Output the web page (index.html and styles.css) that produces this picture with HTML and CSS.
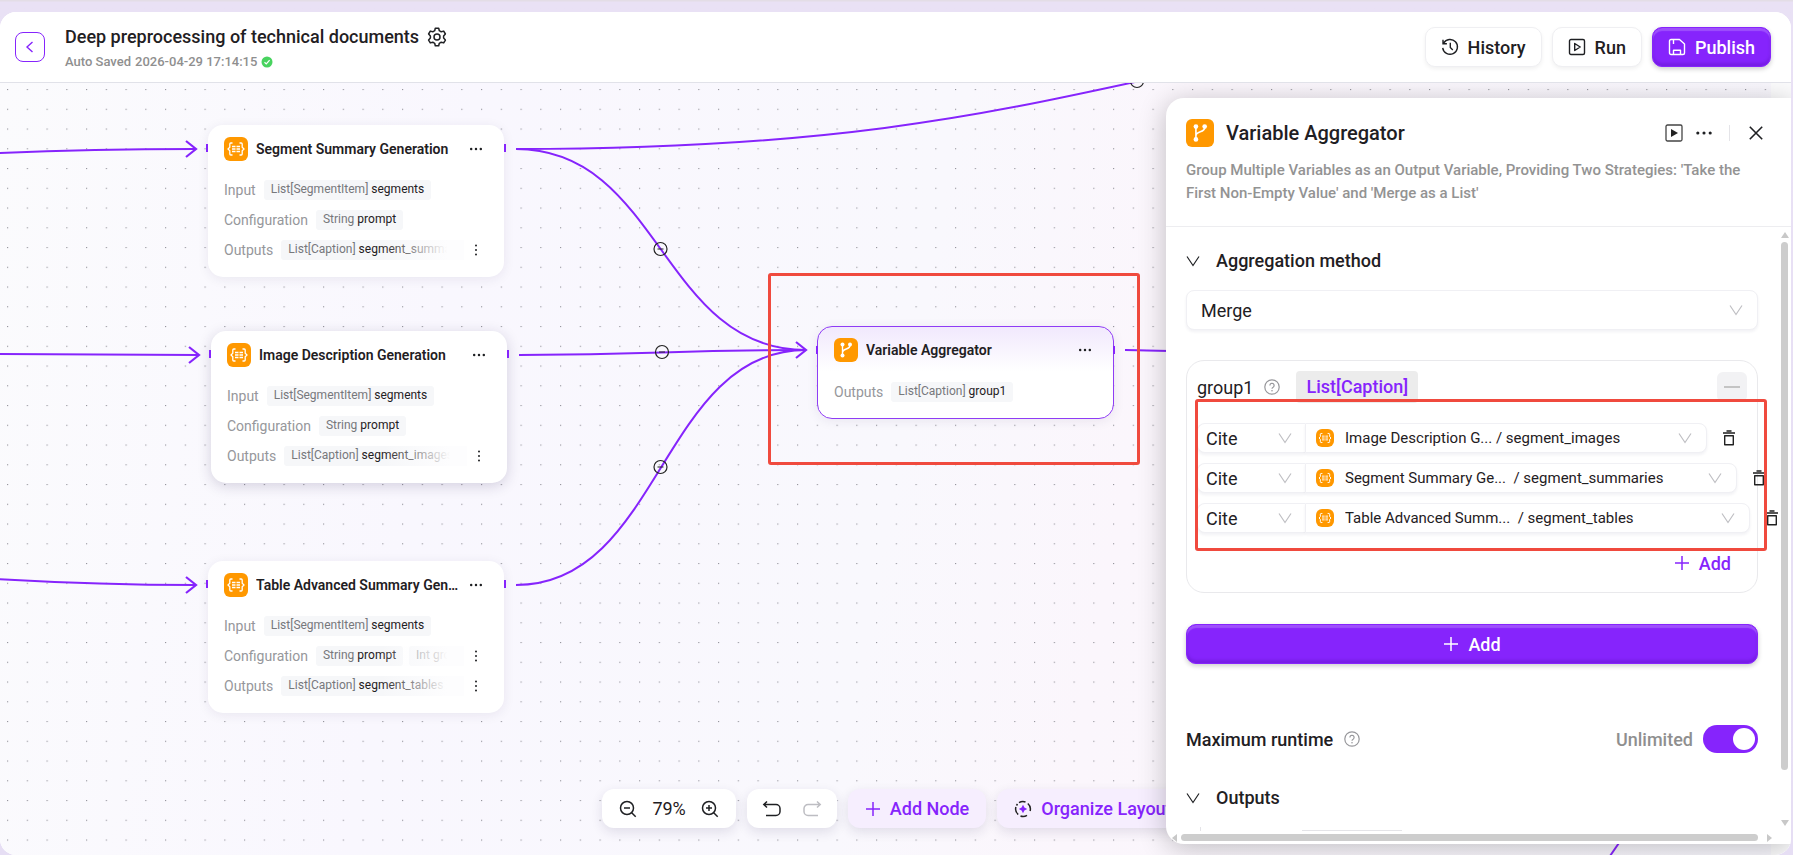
FILE: index.html
```html
<!DOCTYPE html>
<html lang="en">
<head>
  <meta charset="UTF-8">
  <meta name="viewport" content="width=device-width, initial-scale=1.0">
  <title>Deep preprocessing of technical documents</title>
  <link rel="stylesheet" href="styles.css">
</head>

<body>
  <!-- Icon sprite -->
  <svg class="sprite" aria-hidden="true">
    <symbol id="i-list" viewBox="0 0 24 24">
      <g fill="none" stroke="#fff" stroke-width="1.3">
        <path d="M8.5 6H6.8a1 1 0 0 0-1 1v3.2L4 12l1.8 1.8V17a1 1 0 0 0 1 1h1.7M15.500 6h1.700a1 1 0 0 1 1 1v3.200L20 12l-1.800 1.800V17a1 1 0 0 1-1 1h-1.700"/>
        <path d="M8 9.500h3.500M12.500 9.500H16M8 12h3.500M12.500 12H16M8 14.500h3.500M12.500 14.500H16"/>
      </g>
    </symbol>
    <symbol id="i-branch" viewBox="0 0 24 24">
      <path d="M8.500 7v11M16 7.500c0 4.500-7.500 2.500-7.500 7" fill="none" stroke="#fff" stroke-width="1.400"/>
      <circle cx="8.500" cy="6.500" r="2" fill="#fff"/>
      <circle cx="16" cy="6.500" r="2" fill="#fff"/>
      <circle cx="8.500" cy="17.500" r="2" fill="#fff"/>
    </symbol>
    <symbol id="i-down" viewBox="0 0 14 14">
      <path d="M1 2.500l6 9 6-9" fill="none" stroke="currentColor" stroke-width="1.200"/>
    </symbol>
    <symbol id="i-plus" viewBox="0 0 16 16">
      <path d="M8 1v14M1 8h14" fill="none" stroke="currentColor" stroke-width="1.500"/>
    </symbol>
    <symbol id="i-more" viewBox="0 0 16 16">
      <g fill="currentColor"><circle cx="2.500" cy="8" r="1.400"/><circle cx="8" cy="8" r="1.400"/><circle cx="13.500" cy="8" r="1.400"/></g>
    </symbol>
    <symbol id="i-more-v" viewBox="0 0 4 12">
      <g fill="currentColor"><circle cx="2" cy="1.500" r="1"/><circle cx="2" cy="6" r="1"/><circle cx="2" cy="10.500" r="1"/></g>
    </symbol>
    <symbol id="i-help" viewBox="0 0 16 16">
      <g fill="none" stroke="currentColor" stroke-width="1.200"><circle cx="8" cy="8" r="7.200"/><path d="M5.900 6.400a2.100 2.100 0 1 1 3.200 1.800c-.7.400-1.100.8-1.100 1.600"/></g>
      <circle cx="8" cy="11.700" r=".8" fill="currentColor"/>
    </symbol>
    <symbol id="i-trash" viewBox="0 0 16 18">
      <path d="M2 4h12M5.500 2h5" fill="none" stroke="#555" stroke-width="2"/>
      <path d="M3.700 6.700h8.600v9H3.700z" fill="none" stroke="#222" stroke-width="1.400" stroke-linejoin="round"/>
    </symbol>
  </svg>

  <div class="shell">
    <header class="topbar">
      <button type="button" class="back" aria-label="Back">
        <svg width="16" height="16" viewBox="0 0 16 16"><path d="M10.500 3L5 8l5.500 5" fill="none" stroke="currentColor" stroke-width="1.400"/></svg>
      </button>
      <div class="heading">
        <div class="heading-row">
          <h1>Deep preprocessing of technical documents</h1>
          <button type="button" class="plain" aria-label="Settings">
            <svg width="20" height="20" viewBox="0 0 20 20" fill="none" stroke="currentColor" stroke-width="1.500" stroke-linejoin="round">
              <path d="M8.300 1.200h3.400l.6 2.500 1.900 1.100 2.500-.7 1.700 2.900-1.800 1.900v2.200l1.800 1.900-1.700 2.900-2.500-.7-1.900 1.100-.6 2.500H8.300l-.6-2.500-1.900-1.100-2.500.7L1.600 13l1.800-1.900V8.900L1.600 7l1.700-2.900 2.500.7 1.900-1.100z"/>
              <circle cx="10" cy="10" r="3"/>
            </svg>
          </button>
        </div>
        <p class="saved">
          <span>Auto Saved</span>
          <span>2026-04-29 17:14:15</span>
          <svg width="12" height="12" viewBox="0 0 12 12"><circle cx="6" cy="6" r="5.500" fill="#48d35f"/><path d="M3.500 6.200l1.800 1.700 3.300-3.700" fill="none" stroke="#fff" stroke-width="1.200"/></svg>
        </p>
      </div>
      <div class="actions">
        <button type="button" class="btn">
          <svg width="18" height="18" viewBox="0 0 18 18" fill="none" stroke="currentColor" stroke-width="1.400"><path d="M2.600 5.200A7.400 7.400 0 1 1 1.700 9.800M2 1.800v3.900h3.900M9.300 4.800v4.700l2.500 2.400"/></svg>
          History
        </button>
        <button type="button" class="btn">
          <svg width="18" height="18" viewBox="0 0 18 18" fill="none" stroke="currentColor" stroke-width="1.400" stroke-linejoin="round"><rect x="1.500" y="1.500" width="15" height="15" rx="1.500"/><path d="M6.700 5.500v7l5.500-3.500z"/></svg>
          Run
        </button>
        <button type="button" class="btn btn-primary">
          <svg width="18" height="18" viewBox="0 0 18 18" fill="none" stroke="currentColor" stroke-width="1.400" stroke-linejoin="round"><path d="M3 1.500h8.500l5 4.500v9a1.500 1.500 0 0 1-1.500 1.500H3A1.500 1.500 0 0 1 1.500 15V3A1.500 1.500 0 0 1 3 1.500zM5.500 1.500V6M5.500 16.500v-4.200h7v4.200"/></svg>
          Publish
        </button>
      </div>
    </header>

    <main class="canvas">
      <svg class="edges" width="100%" height="100%">
        <defs>
          <pattern id="dots" width="25" height="25" patternUnits="userSpaceOnUse" patternTransform="translate(7 6) scale(.79)">
            <rect width="1.500" height="1.400" fill="#96959d"/>
          </pattern>
          <marker id="arrow" markerUnits="userSpaceOnUse" markerWidth="24" markerHeight="24" refX="11" refY="10" orient="0">
            <path d="M1 2l10 8-10 8" fill="none" stroke="#8624fc" stroke-width="2.200"/>
          </marker>
        </defs>
        <rect class="grid" width="100%" height="100%" fill="url(#dots)"/>
        <g fill="none" stroke="#8624fc" stroke-width="2">
          <path d="M-20 71C60 67 140 66 196 66" marker-end="url(#arrow)"/>
          <path d="M-20 271C60 272 140 272 199 272" marker-end="url(#arrow)"/>
          <path d="M-20 495C60 500 140 502 196 502" marker-end="url(#arrow)"/>
          <path d="M516 66C1137 66 1137-69 1759-69"/>
          <path d="M516 66C661 66 661 267 806 267"/>
          <path d="M519 272C662 272 662 267 806 267"/>
          <path d="M516 502C661 502 661 267 806 267" marker-end="url(#arrow)"/>
          <path d="M1125 267C1140 267 1160 268 1200 269"/>
          <path d="M1610 773l20-29"/>
        </g>
        <g fill="none" stroke="#222" stroke-width="1.200">
          <path d="M657.500 166h6M659 269h6M657.500 384h6"/>
          <circle cx="660.500" cy="166" r="6.500"/>
          <circle cx="662" cy="269" r="6.500"/>
          <circle cx="660.500" cy="384" r="6.500"/>
          <circle cx="1137" cy="-2" r="6.500"/>
        </g>
      </svg>

      <article class="node" style="left: 208px; top: 42px">
        <div class="node-head">
          <span class="badge"><svg><use href="#i-list"/></svg></span>
          <h2>Segment Summary Generation</h2>
          <button type="button" class="plain" aria-label="More"><svg width="14" height="14"><use href="#i-more"/></svg></button>
        </div>
        <div class="line"><span class="key">Input</span><div class="vars"><span class="chip"><i>List[SegmentItem]</i>segments</span></div></div>
        <div class="line"><span class="key">Configuration</span><div class="vars"><span class="chip"><i>String</i>prompt</span></div></div>
        <div class="line"><span class="key">Outputs</span><div class="vars cut"><span class="chip"><i>List[Caption]</i>segment_summaries</span></div><svg class="more-v"><use href="#i-more-v"/></svg></div>
      </article>

      <article class="node raised" style="left: 211px; top: 248px">
        <div class="node-head">
          <span class="badge"><svg><use href="#i-list"/></svg></span>
          <h2>Image Description Generation</h2>
          <button type="button" class="plain" aria-label="More"><svg width="14" height="14"><use href="#i-more"/></svg></button>
        </div>
        <div class="line"><span class="key">Input</span><div class="vars"><span class="chip"><i>List[SegmentItem]</i>segments</span></div></div>
        <div class="line"><span class="key">Configuration</span><div class="vars"><span class="chip"><i>String</i>prompt</span></div></div>
        <div class="line"><span class="key">Outputs</span><div class="vars cut"><span class="chip"><i>List[Caption]</i>segment_images</span></div><svg class="more-v"><use href="#i-more-v"/></svg></div>
      </article>

      <article class="node" style="left: 208px; top: 478px">
        <div class="node-head">
          <span class="badge"><svg><use href="#i-list"/></svg></span>
          <h2>Table Advanced Summary Generation</h2>
          <button type="button" class="plain" aria-label="More"><svg width="14" height="14"><use href="#i-more"/></svg></button>
        </div>
        <div class="line"><span class="key">Input</span><div class="vars"><span class="chip"><i>List[SegmentItem]</i>segments</span></div></div>
        <div class="line"><span class="key">Configuration</span><div class="vars cut"><span class="chip"><i>String</i>prompt</span><span class="chip"><i>Int</i>group</span></div><svg class="more-v"><use href="#i-more-v"/></svg></div>
        <div class="line"><span class="key">Outputs</span><div class="vars cut"><span class="chip"><i>List[Caption]</i>segment_tables</span></div><svg class="more-v"><use href="#i-more-v"/></svg></div>
      </article>

      <article class="node selected" style="left: 817px; top: 243px">
        <div class="node-head">
          <span class="badge"><svg><use href="#i-branch"/></svg></span>
          <h2>Variable Aggregator</h2>
          <button type="button" class="plain" aria-label="More"><svg width="14" height="14"><use href="#i-more"/></svg></button>
        </div>
        <div class="line"><span class="key">Outputs</span><div class="vars"><span class="chip"><i>List[Caption]</i>group1</span></div></div>
      </article>

      <div class="mark" style="left: 768px; top: 190px; width: 372px; height: 192px"></div>

      <div class="toolbar">
        <div class="tool-group">
          <button type="button" class="plain" aria-label="Zoom out"><svg width="18" height="18" viewBox="0 0 18 18" fill="none" stroke="currentColor" stroke-width="1.500"><circle cx="8" cy="8" r="6.500"/><path d="M12.700 12.700l4 4M5 8h6"/></svg></button>
          <span class="zoom">79%</span>
          <button type="button" class="plain" aria-label="Zoom in"><svg width="18" height="18" viewBox="0 0 18 18" fill="none" stroke="currentColor" stroke-width="1.500"><circle cx="8" cy="8" r="6.500"/><path d="M12.700 12.700l4 4M5 8h6M8 5v6"/></svg></button>
        </div>
        <div class="tool-group history">
          <button type="button" class="plain" aria-label="Undo"><svg width="20" height="18" viewBox="0 0 20 18" fill="none" stroke="currentColor" stroke-width="1.500"><path d="M5 1.500L1.800 4.500 5 7.500M1.800 4.500H14a4 4 0 0 1 4 4v3a4 4 0 0 1-4 4H4"/></svg></button>
          <button type="button" class="plain" aria-label="Redo" disabled><svg width="20" height="18" viewBox="0 0 20 18" fill="none" stroke="currentColor" stroke-width="1.500"><path d="M15 1.500l3.200 3L15 7.500M18.200 4.500H6a4 4 0 0 0-4 4v3a4 4 0 0 0 4 4h10"/></svg></button>
        </div>
        <button type="button" class="tool-btn"><svg width="16" height="16"><use href="#i-plus"/></svg>Add Node</button>
        <button type="button" class="tool-btn">
          <svg width="18" height="18" viewBox="0 0 18 18"><path d="M5 2.700a7.400 7.400 0 0 1 6.500-.7M13.800 3.500a7.400 7.400 0 0 1 2.300 7.500M13 15.300a7.400 7.400 0 0 1-6.500.7M4.200 14.500A7.400 7.400 0 0 1 1.900 7M2.500 5.500l1-1.500" fill="none" stroke="#222" stroke-width="1.500"/><path d="M9 4.800l1.400 2.800L13.200 9l-2.800 1.400L9 13.200l-1.400-2.800L4.800 9l2.800-1.400z" fill="#8624fc"/></svg>
          Organize Layout
        </button>
      </div>

      <div class="rail"></div>

      <aside class="panel">
        <div class="panel-head">
          <div class="panel-title">
            <span class="badge badge-lg"><svg><use href="#i-branch"/></svg></span>
            <h2>Variable Aggregator</h2>
            <button type="button" class="plain" aria-label="Run node"><svg width="18" height="18" viewBox="0 0 18 18"><rect x="1" y="1" width="16" height="16" rx="1.500" fill="none" stroke="#444" stroke-width="1.300"/><path d="M6 5v8l7-4z" fill="#222"/></svg></button>
            <button type="button" class="plain" aria-label="More"><svg width="18" height="18"><use href="#i-more"/></svg></button>
            <span class="divider"></span>
            <button type="button" class="plain" aria-label="Close"><svg width="14" height="14" viewBox="0 0 14 14"><path d="M.8.8l12.400 12.400M13.200.8L.8 13.200" stroke="currentColor" stroke-width="1.600"/></svg></button>
          </div>
          <p>Group Multiple Variables as an Output Variable, Providing Two Strategies: 'Take the First Non-Empty Value' and 'Merge as a List'</p>
        </div>

        <div class="panel-scroll">
          <div class="panel-body">
            <h3 class="section"><svg width="14" height="14"><use href="#i-down"/></svg><label for="method">Aggregation method</label></h3>
            <div class="select method">
              <select id="method"><option>Merge</option></select>
              <svg class="caret"><use href="#i-down"/></svg>
            </div>

            <div class="group">
              <div class="group-head">
                <span>group1</span>
                <svg class="help" width="16" height="16"><use href="#i-help"/></svg>
                <span class="type">List[Caption]</span>
                <button type="button" class="remove" aria-label="Remove group"><svg width="16" height="2"><path d="M0 1h16" stroke="#b5b5b5" stroke-width="1.500"/></svg></button>
              </div>

              <div class="refs">
                <div class="ref">
                  <div class="select kind"><select aria-label="Value type"><option>Cite</option></select><svg class="caret"><use href="#i-down"/></svg></div>
                  <div class="select source" style="width: 402px">
                    <span class="badge badge-sm"><svg><use href="#i-list"/></svg></span>
                    <select aria-label="Variable"><option>Image Description G... / segment_images</option></select>
                    <svg class="caret"><use href="#i-down"/></svg>
                  </div>
                  <button type="button" class="plain" aria-label="Delete"><svg width="16" height="18"><use href="#i-trash"/></svg></button>
                </div>
                <div class="ref">
                  <div class="select kind"><select aria-label="Value type"><option>Cite</option></select><svg class="caret"><use href="#i-down"/></svg></div>
                  <div class="select source" style="width: 432px">
                    <span class="badge badge-sm"><svg><use href="#i-list"/></svg></span>
                    <select aria-label="Variable"><option>Segment Summary Ge...&nbsp; / segment_summaries</option></select>
                    <svg class="caret"><use href="#i-down"/></svg>
                  </div>
                  <button type="button" class="plain" aria-label="Delete"><svg width="16" height="18"><use href="#i-trash"/></svg></button>
                </div>
                <div class="ref">
                  <div class="select kind"><select aria-label="Value type"><option>Cite</option></select><svg class="caret"><use href="#i-down"/></svg></div>
                  <div class="select source" style="width: 445px">
                    <span class="badge badge-sm"><svg><use href="#i-list"/></svg></span>
                    <select aria-label="Variable"><option>Table Advanced Summ...&nbsp; / segment_tables</option></select>
                    <svg class="caret"><use href="#i-down"/></svg>
                  </div>
                  <button type="button" class="plain" aria-label="Delete"><svg width="16" height="18"><use href="#i-trash"/></svg></button>
                </div>
                <div class="mark mark-refs"></div>
              </div>

              <button type="button" class="add-link"><svg width="16" height="16"><use href="#i-plus"/></svg>Add</button>
            </div>

            <button type="button" class="btn btn-primary add-group"><svg width="16" height="16"><use href="#i-plus"/></svg>Add</button>

            <div class="runtime">
              <h3>Maximum runtime</h3>
              <svg class="help" width="16" height="16"><use href="#i-help"/></svg>
              <label for="unlimited">Unlimited</label>
              <input type="checkbox" id="unlimited" class="switch" checked>
            </div>

            <h3 class="section"><svg width="14" height="14"><use href="#i-down"/></svg>Outputs</h3>
            <div class="tree"><div class="tree-field"></div></div>
          </div>
          <div class="vbar">
            <svg width="8" height="6"><path d="M4 0l4 6H0z" fill="#c8c8c8"/></svg>
            <span class="thumb"></span>
            <svg width="8" height="6"><path d="M0 0h8L4 6z" fill="#c8c8c8"/></svg>
          </div>
        </div>
        <div class="hbar">
          <svg width="5" height="8"><path d="M5 0v8L0 4z" fill="#c8c8c8"/></svg>
          <span class="thumb"></span>
          <svg width="5" height="8"><path d="M0 0v8l5-4z" fill="#c8c8c8"/></svg>
        </div>
      </aside>
    </main>
  </div>
</body>
</html>
```
FILE: styles.css
```css
* {
  box-sizing: border-box;
}

body {
  font-family: Roboto, "Liberation Sans", sans-serif;
  font-size: 18px;
  color: #1f2023;
  margin: 0;
  height: 100vh;
  padding: 12px 2px 0 0;
  background: linear-gradient(#e3dde6 1px, #e9e1f5 2px, #e6def4);
  overflow: hidden;
}

h1, h2, h3, p {
  margin: 0;
  font-weight: 500;
}

button, select {
  font: inherit;
  color: inherit;
  cursor: pointer;
}

svg {
  flex: none;
}

.sprite {
  display: none;
}

.shell {
  display: flex;
  flex-direction: column;
  height: 100%;
  background: #fff;
  border-radius: 16px;
  overflow: hidden;
}

.plain {
  display: flex;
  padding: 0;
  border: 0;
  background: none;
}

.plain:disabled {
  color: #bdbdc2;
}

/* Top bar */
.topbar {
  display: flex;
  align-items: center;
  height: 71px;
  padding: 0 20px 0 15px;
  border-bottom: 1px solid #e1e2e9;
  background: #fff;
}

.back {
  display: flex;
  align-items: center;
  justify-content: center;
  width: 30px;
  height: 30px;
  padding: 0;
  color: #8624fc;
  background: #fff;
  border: 1px solid #8624fc;
  border-radius: 8px;
}

.heading {
  flex: 1;
  margin: 3px 0 0 20px;
}

.heading-row {
  display: flex;
  align-items: center;
  gap: 8px;
}

.heading h1 {
  font-size: 18px;
  line-height: 26px;
}

.saved {
  display: flex;
  align-items: center;
  gap: 4px;
  font-size: 13px;
  line-height: 24px;
  color: #8f8f8f;
}

.actions {
  display: flex;
  gap: 10px;
}

.btn {
  display: flex;
  align-items: center;
  justify-content: center;
  gap: 9px;
  height: 40px;
  padding: 0 15px;
  font-weight: 500;
  background: #fff;
  border: 1px solid #efeff2;
  border-radius: 10px;
  box-shadow: 0 2px 4px rgba(0, 0, 0, 0.06);
}

.btn-primary {
  color: #fff;
  background: #8624fc;
  border-color: #8624fc;
  box-shadow: 0 2px 5px rgba(0, 0, 0, 0.2), inset 0 3px 1px rgba(255, 255, 255, 0.2), inset 0 -3px 3px rgba(60, 0, 140, 0.2);
}

/* Canvas */
.canvas {
  position: relative;
  flex: 1;
  min-height: 0;
  overflow: hidden;
  background: linear-gradient(100deg, #fbfbfd 0%, #f9f7fe 25%, #f9f8fd 50%, #fbf6fc 62%, #f8f7fd 100%);
}

.edges {
  position: absolute;
  inset: 0;
}

.rail {
  position: absolute;
  top: 0;
  right: 0;
  width: 20px;
  height: 100%;
  background: #fcfcfd;
}

.node {
  position: absolute;
  width: 296px;
  padding: 11px 16px 17px;
  background: #fff;
  border-radius: 15px;
  box-shadow: 0 2px 12px rgba(40, 30, 80, 0.08);
}

.node.raised {
  box-shadow: 0 3px 14px rgba(40, 30, 80, 0.18);
}

.node.selected {
  padding: 10px 16px 16px;
  width: 297px;
  border: 1px solid #8f3cf5;
  background: linear-gradient(#f1e9fd, #fff 45px);
}

.node.selected .node-head {
  margin-bottom: 20px;
}

.node::before, .node::after {
  content: "";
  position: absolute;
  top: 19px;
  left: -2px;
  width: 2px;
  height: 8px;
  background: #8624fc;
}

.node::after {
  left: auto;
  right: -2px;
}

.node-head {
  display: flex;
  align-items: center;
  gap: 8px;
  height: 25px;
  margin-bottom: 19px;
}

.node-head h2 {
  flex: 1;
  min-width: 0;
  font-size: 14px;
  font-weight: 600;
  overflow: hidden;
  white-space: nowrap;
  text-overflow: ellipsis;
}

.node-head .plain {
  margin-right: 5px;
}

.badge {
  display: flex;
  flex: none;
  width: 24px;
  height: 24px;
  border-radius: 6px;
  background: #ff9800;
}

.badge svg {
  width: 100%;
  height: 100%;
}

.badge-lg {
  width: 28px;
  height: 28px;
}

.badge-sm {
  width: 18px;
  height: 18px;
}

.line {
  display: flex;
  align-items: center;
  gap: 8px;
  height: 20px;
  margin-top: 10px;
}

.key {
  font-size: 14px;
  color: #96979b;
}

.vars {
  position: relative;
  display: flex;
  gap: 6px;
  min-width: 0;
}

.vars.cut {
  flex: 1;
  overflow: hidden;
}

.vars.cut::after {
  content: "";
  position: absolute;
  inset: 0 0 0 auto;
  width: 84px;
  background: linear-gradient(90deg, rgba(255, 255, 255, 0), #fdfdfe 80%);
}

.chip {
  flex: none;
  height: 20px;
  padding: 0 7px;
  font-size: 12px;
  line-height: 19px;
  border-radius: 3px;
  background: #f6f7f9;
}

.chip i {
  margin-right: 3px;
  font-style: normal;
  color: #77787c;
}

.more-v {
  width: 4px;
  height: 12px;
  margin: 0 10px 0 2px;
}

.mark {
  position: absolute;
  border: 3px solid #f04a3e;
  border-radius: 3px;
  pointer-events: none;
}

/* Bottom toolbar */
.toolbar {
  position: absolute;
  left: 0;
  right: 0;
  bottom: 27px;
  display: flex;
  justify-content: center;
  gap: 11px;
}

.tool-group, .tool-btn {
  display: flex;
  align-items: center;
  gap: 15px;
  height: 39px;
  padding: 0 17px;
  border: 0;
  border-radius: 12px;
  background: #fff;
  box-shadow: 0 4px 12px rgba(40, 30, 80, 0.12);
}

.history {
  gap: 20px;
  padding: 0 15px;
}

.tool-btn {
  gap: 9px;
  font-weight: 500;
  color: #8624fc;
  background: #f6eefe;
}

/* Settings panel */
.panel {
  position: absolute;
  top: 15px;
  right: 0;
  bottom: 11px;
  display: flex;
  flex-direction: column;
  width: 625px;
  background: #fff;
  border-radius: 18px 0 0 18px;
  box-shadow: 0 4px 28px rgba(0, 0, 0, 0.24);
  overflow: hidden;
}

.panel-head {
  padding: 20px 28px 21px 20px;
  border-bottom: 1px solid #ededf0;
}

.panel-title {
  display: flex;
  align-items: center;
  gap: 12px;
  height: 30px;
}

.panel-title h2 {
  flex: 1;
  font-size: 20px;
}

.divider {
  width: 1px;
  height: 16px;
  margin: 0 7px 0 4px;
  background: #e4e4e8;
}

.panel-head p {
  margin-top: 11px;
  font-size: 15px;
  line-height: 23px;
  color: #939393;
}

.panel-scroll {
  display: flex;
  flex: 1;
  min-height: 0;
}

.panel-body {
  flex: 1;
  min-width: 0;
  padding: 22px 20px 0;
  overflow: hidden;
}

.section {
  display: flex;
  align-items: center;
  gap: 16px;
  font-size: 18px;
  line-height: 24px;
}

.select {
  position: relative;
  display: flex;
  align-items: center;
  background: #fff;
  border: 1px solid #f0f0f4;
  border-radius: 8px;
  box-shadow: 0 2px 3px rgba(40, 30, 80, 0.06);
}

.select select {
  flex: 1;
  min-width: 0;
  height: 100%;
  padding: 0 30px 0 14px;
  border: 0;
  background: none;
  appearance: none;
}

.caret {
  position: absolute;
  right: 14px;
  width: 14px;
  height: 14px;
  color: #bfbfc3;
  pointer-events: none;
}

.method {
  height: 40px;
  margin-top: 17px;
}

.group {
  margin-top: 30px;
  padding: 10px 10px 17px;
  border: 1px solid #e9e9ec;
  border-radius: 18px;
}

.group-head {
  display: flex;
  align-items: center;
  height: 32px;
}

.help {
  margin: 0 16px 0 11px;
  color: #97979b;
}

.type {
  padding: 0 10px;
  font-weight: 500;
  line-height: 32px;
  color: #8624fc;
  background: #ececec;
  border-radius: 4px;
}

.remove {
  display: flex;
  align-items: center;
  justify-content: center;
  width: 30px;
  height: 30px;
  margin-left: auto;
  padding: 0;
  border: 0;
  border-radius: 6px;
  background: #f2f2f4;
}

.refs {
  position: relative;
  display: flex;
  flex-direction: column;
  gap: 10px;
  margin-top: 20px;
}

.ref {
  display: flex;
  align-items: center;
  height: 30px;
}

.ref .select {
  flex: none;
  height: 30px;
}

.ref .kind {
  width: 108px;
  border-right: 0;
  border-radius: 8px 0 0 8px;
}

.ref .kind select {
  padding-left: 8px;
}

.ref .kind .caret {
  right: 13px;
}

.ref .source {
  padding-left: 10px;
  border-radius: 0 8px 8px 0;
}

.ref .source select {
  padding-left: 11px;
  font-size: 15px;
}

.ref .plain {
  margin-left: 14px;
}

.mark-refs {
  inset: -24px -20px -18px -2px;
}

.add-link {
  display: flex;
  align-items: center;
  gap: 9px;
  height: 24px;
  margin: 18px 16px 0 auto;
  padding: 0;
  font-weight: 500;
  color: #8624fc;
  border: 0;
  background: none;
}

.add-group {
  width: 100%;
  margin-top: 31px;
}

.runtime {
  display: flex;
  align-items: center;
  margin-top: 61px;
  margin-bottom: 33px;
}

.runtime h3 {
  font-size: 18px;
}

.runtime label {
  margin-left: auto;
  font-weight: 500;
  color: #8f8f8f;
}

.switch {
  appearance: none;
  width: 55px;
  height: 28px;
  margin: 0 0 0 10px;
  padding: 3px;
  border-radius: 14px;
  background: #8624fc;
  cursor: pointer;
}

.switch::before {
  content: "";
  display: block;
  width: 22px;
  height: 22px;
  margin-left: auto;
  border-radius: 50%;
  background: #fff;
}

.switch:not(:checked)::before {
  margin-left: 0;
}

.tree {
  margin: 17px 0 0 14px;
  padding: 3px 0 0 101px;
  border-left: 1px solid #e4e4e8;
}

.tree-field {
  width: 100px;
  height: 30px;
  border-top: 1px solid #e4e4e8;
}

/* Scrollbars */
.vbar {
  display: flex;
  flex-direction: column;
  align-items: center;
  gap: 4px;
  width: 13px;
  padding: 5px 0;
}

.thumb {
  flex: 1;
  border-radius: 4px;
  background: #cdcdcd;
}

.vbar .thumb {
  width: 7px;
  margin-bottom: 46px;
}

.hbar {
  display: flex;
  align-items: center;
  gap: 4px;
  height: 13px;
  padding: 0 19px 0 6px;
}

.hbar .thumb {
  height: 7px;
  margin-right: 5px;
}
```
